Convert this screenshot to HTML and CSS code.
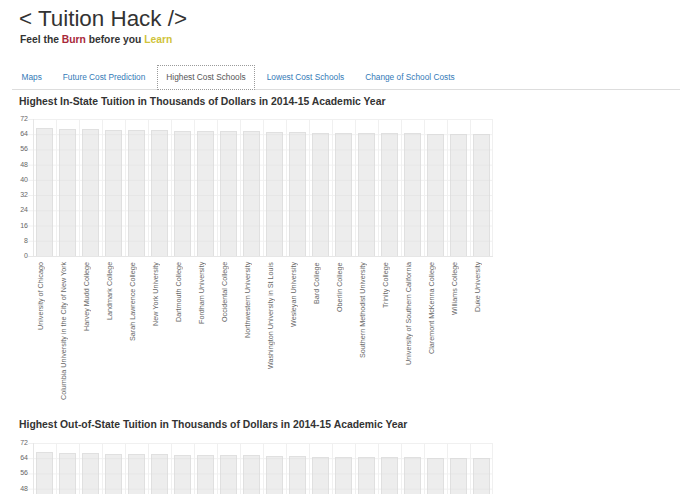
FILE: index.html
```html
<!DOCTYPE html>
<html>
<head>
<meta charset="utf-8">
<title>Tuition Hack</title>
<link rel="stylesheet" href="styles.css">
</head>
<body>
<div class="page">
  <h1 class="brand">&lt; Tuition Hack /&gt;</h1>
  <p class="tagline">Feel the <span class="burn">Burn</span> before you <span class="learn">Learn</span></p>

  <ul class="tabs">
    <li><a href="#">Maps</a></li>
    <li><a href="#">Future Cost Prediction</a></li>
    <li class="active"><a href="#">Highest Cost Schools</a></li>
    <li><a href="#">Lowest Cost Schools</a></li>
    <li><a href="#">Change of School Costs</a></li>
  </ul>

  <section class="chart">
    <h4 class="chart-title">Highest In-State Tuition in Thousands of Dollars in 2014-15 Academic Year</h4>
    <div class="chart-body">
      <div class="yaxis">
        <span>72</span><span>64</span><span>56</span><span>48</span><span>40</span><span>32</span><span>24</span><span>16</span><span>8</span><span>0</span>
      </div>
      <div class="chart-main">
        <div class="plot">
          <div class="slot"><div class="bar" style="height:93.5%"></div></div>
          <div class="slot"><div class="bar" style="height:92.8%"></div></div>
          <div class="slot"><div class="bar" style="height:92.5%"></div></div>
          <div class="slot"><div class="bar" style="height:91.8%"></div></div>
          <div class="slot"><div class="bar" style="height:91.8%"></div></div>
          <div class="slot"><div class="bar" style="height:91.7%"></div></div>
          <div class="slot"><div class="bar" style="height:91.4%"></div></div>
          <div class="slot"><div class="bar" style="height:91.3%"></div></div>
          <div class="slot"><div class="bar" style="height:91.3%"></div></div>
          <div class="slot"><div class="bar" style="height:91.1%"></div></div>
          <div class="slot"><div class="bar" style="height:90.8%"></div></div>
          <div class="slot"><div class="bar" style="height:90.3%"></div></div>
          <div class="slot"><div class="bar" style="height:90.1%"></div></div>
          <div class="slot"><div class="bar" style="height:89.9%"></div></div>
          <div class="slot"><div class="bar" style="height:89.7%"></div></div>
          <div class="slot"><div class="bar" style="height:89.7%"></div></div>
          <div class="slot"><div class="bar" style="height:89.6%"></div></div>
          <div class="slot"><div class="bar" style="height:89.4%"></div></div>
          <div class="slot"><div class="bar" style="height:89.4%"></div></div>
          <div class="slot"><div class="bar" style="height:89.2%"></div></div>
        </div>
        <div class="xlabels">
          <div class="xcell"><span class="xlab">University of Chicago</span></div>
          <div class="xcell"><span class="xlab">Columbia University in the City of New York</span></div>
          <div class="xcell"><span class="xlab">Harvey Mudd College</span></div>
          <div class="xcell"><span class="xlab">Landmark College</span></div>
          <div class="xcell"><span class="xlab">Sarah Lawrence College</span></div>
          <div class="xcell"><span class="xlab">New York University</span></div>
          <div class="xcell"><span class="xlab">Dartmouth College</span></div>
          <div class="xcell"><span class="xlab">Fordham University</span></div>
          <div class="xcell"><span class="xlab">Occidental College</span></div>
          <div class="xcell"><span class="xlab">Northwestern University</span></div>
          <div class="xcell"><span class="xlab">Washington University in St Louis</span></div>
          <div class="xcell"><span class="xlab">Wesleyan University</span></div>
          <div class="xcell"><span class="xlab">Bard College</span></div>
          <div class="xcell"><span class="xlab">Oberlin College</span></div>
          <div class="xcell"><span class="xlab">Southern Methodist University</span></div>
          <div class="xcell"><span class="xlab">Trinity College</span></div>
          <div class="xcell"><span class="xlab">University of Southern California</span></div>
          <div class="xcell"><span class="xlab">Claremont McKenna College</span></div>
          <div class="xcell"><span class="xlab">Williams College</span></div>
          <div class="xcell"><span class="xlab">Duke University</span></div>
        </div>
      </div>
    </div>
  </section>

  <section class="chart">
    <h4 class="chart-title">Highest Out-of-State Tuition in Thousands of Dollars in 2014-15 Academic Year</h4>
    <div class="chart-body">
      <div class="yaxis">
        <span>72</span><span>64</span><span>56</span><span>48</span><span>40</span><span>32</span><span>24</span><span>16</span><span>8</span><span>0</span>
      </div>
      <div class="chart-main">
        <div class="plot">
          <div class="slot"><div class="bar" style="height:93.5%"></div></div>
          <div class="slot"><div class="bar" style="height:92.8%"></div></div>
          <div class="slot"><div class="bar" style="height:92.5%"></div></div>
          <div class="slot"><div class="bar" style="height:91.8%"></div></div>
          <div class="slot"><div class="bar" style="height:91.8%"></div></div>
          <div class="slot"><div class="bar" style="height:91.7%"></div></div>
          <div class="slot"><div class="bar" style="height:91.4%"></div></div>
          <div class="slot"><div class="bar" style="height:91.3%"></div></div>
          <div class="slot"><div class="bar" style="height:91.3%"></div></div>
          <div class="slot"><div class="bar" style="height:91.1%"></div></div>
          <div class="slot"><div class="bar" style="height:90.8%"></div></div>
          <div class="slot"><div class="bar" style="height:90.3%"></div></div>
          <div class="slot"><div class="bar" style="height:90.1%"></div></div>
          <div class="slot"><div class="bar" style="height:89.9%"></div></div>
          <div class="slot"><div class="bar" style="height:89.7%"></div></div>
          <div class="slot"><div class="bar" style="height:89.7%"></div></div>
          <div class="slot"><div class="bar" style="height:89.6%"></div></div>
          <div class="slot"><div class="bar" style="height:89.4%"></div></div>
          <div class="slot"><div class="bar" style="height:89.4%"></div></div>
          <div class="slot"><div class="bar" style="height:89.2%"></div></div>
        </div>
        <div class="xlabels">
          <div class="xcell"><span class="xlab">University of Chicago</span></div>
          <div class="xcell"><span class="xlab">Columbia University in the City of New York</span></div>
          <div class="xcell"><span class="xlab">Harvey Mudd College</span></div>
          <div class="xcell"><span class="xlab">Landmark College</span></div>
          <div class="xcell"><span class="xlab">Sarah Lawrence College</span></div>
          <div class="xcell"><span class="xlab">New York University</span></div>
          <div class="xcell"><span class="xlab">Dartmouth College</span></div>
          <div class="xcell"><span class="xlab">Fordham University</span></div>
          <div class="xcell"><span class="xlab">Occidental College</span></div>
          <div class="xcell"><span class="xlab">Northwestern University</span></div>
          <div class="xcell"><span class="xlab">Washington University in St Louis</span></div>
          <div class="xcell"><span class="xlab">Wesleyan University</span></div>
          <div class="xcell"><span class="xlab">Bard College</span></div>
          <div class="xcell"><span class="xlab">Oberlin College</span></div>
          <div class="xcell"><span class="xlab">Southern Methodist University</span></div>
          <div class="xcell"><span class="xlab">Trinity College</span></div>
          <div class="xcell"><span class="xlab">University of Southern California</span></div>
          <div class="xcell"><span class="xlab">Claremont McKenna College</span></div>
          <div class="xcell"><span class="xlab">Williams College</span></div>
          <div class="xcell"><span class="xlab">Duke University</span></div>
        </div>
      </div>
    </div>
  </section>
</div>
</body>
</html>
```

FILE: styles.css
```css
html {
  overflow: hidden;
}

body {
  margin: 0;
  background: #ffffff;
  color: #333333;
  font-family: "Liberation Sans", Arial, Helvetica, sans-serif;
}

.page {
  padding: 0 15px 0 12px;
}

.brand {
  margin: 7px 0 0 7px;
  font-size: 22.4px;
  line-height: 24px;
  font-weight: normal;
  color: #333333;
}

.tagline {
  margin: 3px 0 0 8px;
  font-size: 10.3px;
  line-height: 12px;
  font-weight: bold;
  color: #333333;
}

.burn {
  color: #a8283a;
}

.learn {
  color: #cfc33a;
}

.tabs {
  list-style: none;
  margin: 19px 0 0 0;
  padding: 0;
  display: flex;
  border-bottom: 1px solid #dddddd;
}

.tabs li {
  margin: 0 2px -1px 0;
}

.tabs a {
  display: block;
  padding: 0 8.5px;
  height: 23px;
  line-height: 23px;
  border: 1px solid transparent;
  font-size: 8.3px;
  color: #337ab7;
  text-decoration: none;
}

.tabs .active a {
  color: #555555;
  background: #ffffff;
  border: 1px dotted #9a9a9a;
}

.chart-title {
  margin: 5px 0 0 7px;
  font-size: 10.4px;
  line-height: 13px;
  font-weight: bold;
  color: #333333;
}

.chart-body {
  display: flex;
  margin-top: 11px;
}

.chart + .chart .chart-title {
  margin-top: 6px;
}

.chart + .chart .chart-body {
  margin-top: 12px;
}

.yaxis {
  width: 16px;
  height: 137px;
  display: flex;
  flex-direction: column;
  justify-content: space-between;
  align-items: flex-end;
  font-size: 7px;
  color: #666666;
}

.yaxis span {
  line-height: 0;
  height: 0;
}

.chart-main {
  padding-left: 5px;
}

.plot {
  display: grid;
  grid-template-columns: repeat(20, 23px);
  height: 137px;
  margin-left: -5px;
  padding-left: 5px;
  border-bottom: 1px solid #e6e6e6;
  background-image: linear-gradient(to bottom, #f0f0f0 1px, transparent 1px);
  background-size: 100% 15.222px;
  background-repeat: repeat-y;
}

.slot {
  display: flex;
  align-items: flex-end;
  border-left: 1px solid #f0f0f0;
}

.slot:first-child {
  border-left-color: #e6e6e6;
}

.slot:last-child {
  border-right: 1px solid #f0f0f0;
}

.bar {
  width: 17px;
  margin-left: 2px;
  box-sizing: border-box;
  background: rgba(220, 220, 220, 0.5);
  border: 1px solid rgba(220, 220, 220, 0.8);
  border-bottom: none;
}

.xlabels {
  display: grid;
  grid-template-columns: repeat(20, 23px);
  height: 155px;
}

.xcell {
  display: flex;
  align-items: flex-start;
  padding: 5px 0 0 3px;
  border-left: 1px solid transparent;
}

.xlab {
  writing-mode: vertical-rl;
  transform: rotate(180deg);
  height: 148px;
  line-height: 8px;
  text-align: end;
  white-space: nowrap;
  font-size: 7.2px;
  color: #666666;
}
```
